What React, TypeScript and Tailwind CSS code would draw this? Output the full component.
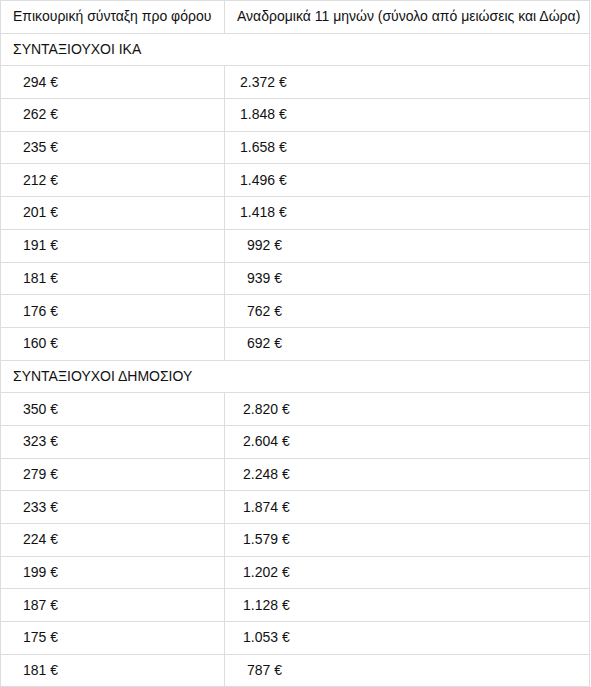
import clsx from "clsx"

type Row = { type: "section"; label: string } | { type: "row"; a: string; b: string; pad: string }

const rows: Row[] = [
  { type: "section", label: "ΣΥΝΤΑΞΙΟΥΧΟΙ ΙΚΑ" },
  { type: "row", a: "294 €", b: "2.372 €", pad: "pl-[15px]" },
  { type: "row", a: "262 €", b: "1.848 €", pad: "pl-[15px]" },
  { type: "row", a: "235 €", b: "1.658 €", pad: "pl-[15px]" },
  { type: "row", a: "212 €", b: "1.496 €", pad: "pl-[15px]" },
  { type: "row", a: "201 €", b: "1.418 €", pad: "pl-[15px]" },
  { type: "row", a: "191 €", b: "992 €", pad: "pl-[22px]" },
  { type: "row", a: "181 €", b: "939 €", pad: "pl-[22px]" },
  { type: "row", a: "176 €", b: "762 €", pad: "pl-[22px]" },
  { type: "row", a: "160 €", b: "692 €", pad: "pl-[22px]" },
  { type: "section", label: "ΣΥΝΤΑΞΙΟΥΧΟΙ ΔΗΜΟΣΙΟΥ" },
  { type: "row", a: "350 €", b: "2.820 €", pad: "pl-[18px]" },
  { type: "row", a: "323 €", b: "2.604 €", pad: "pl-[18px]" },
  { type: "row", a: "279 €", b: "2.248 €", pad: "pl-[18px]" },
  { type: "row", a: "233 €", b: "1.874 €", pad: "pl-[18px]" },
  { type: "row", a: "224 €", b: "1.579 €", pad: "pl-[18px]" },
  { type: "row", a: "199 €", b: "1.202 €", pad: "pl-[18px]" },
  { type: "row", a: "187 €", b: "1.128 €", pad: "pl-[18px]" },
  { type: "row", a: "175 €", b: "1.053 €", pad: "pl-[18px]" },
  { type: "row", a: "181 €", b: "787 €", pad: "pl-[22px]" },
]

const cell = "border border-[#dddddd] p-0 align-middle"

export default function App() {
  return (
    <div className="bg-white w-[591px] h-[687px] overflow-hidden font-['Liberation_Sans',Arial,sans-serif] text-[14px] text-[#111111]">
      <table className="w-[590px] border-collapse table-fixed">
        <colgroup>
          <col className="w-[224px]" />
          <col />
        </colgroup>
        <tbody>
          <tr className="h-[32.7px]">
            <td className={clsx(cell, "pl-3")}>Επικουρική σύνταξη προ φόρου</td>
            <td className={clsx(cell, "pl-3")}>Αναδρομικά 11 μηνών (σύνολο από μειώσεις και Δώρα)</td>
          </tr>
          {rows.map((r, i) =>
            r.type === "section" ? (
              <tr key={i} className="h-[32.7px]">
                <td colSpan={2} className={clsx(cell, "pl-3")}>
                  {r.label}
                </td>
              </tr>
            ) : (
              <tr key={i} className="h-[32.7px]">
                <td className={clsx(cell, "pl-[22px]")}>{r.a}</td>
                <td className={clsx(cell, r.pad)}>{r.b}</td>
              </tr>
            )
          )}
        </tbody>
      </table>
    </div>
  )
}
